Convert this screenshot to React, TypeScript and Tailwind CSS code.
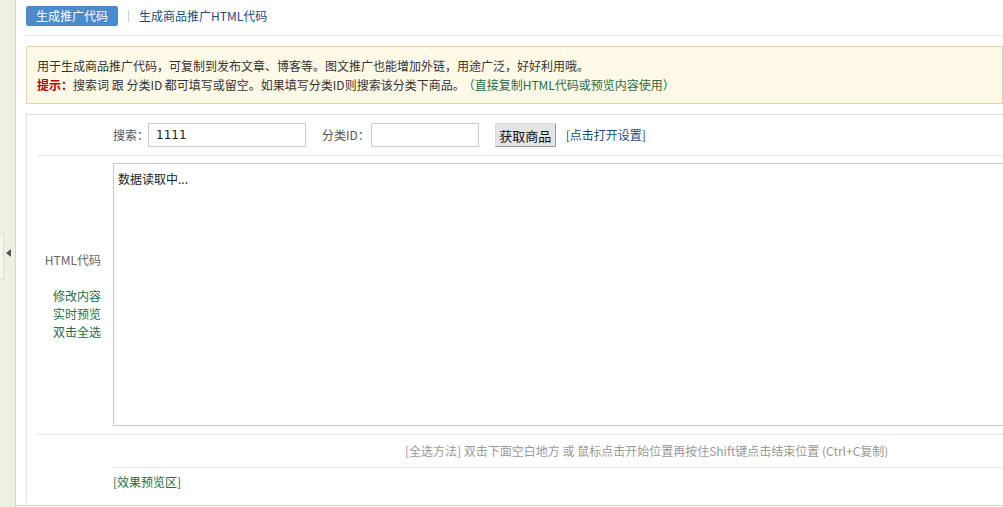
import React from "react";

const font = { fontFamily: '"Noto Sans CJK SC", "Liberation Sans", sans-serif' };

export default function App() {
  return (
    <div
      className="w-[1003px] h-[507px] overflow-hidden bg-white flex text-[12px] leading-[18px] text-[#333]"
      style={font}
    >
      {/* left strip */}
      <div className="w-[16px] shrink-0 bg-[#edf2e0] border-r border-[#cfdcb8] flex flex-col">
        <div className="h-[233px]" />
        <div className="h-[47px] flex">
          <div className="w-[4px] h-full border-y border-r border-[#d7e1c6] bg-[#f4f7ee]" />
          <div className="relative flex-1">
            <div className="absolute left-[2px] top-[16px] w-0 h-0 border-y-[4px] border-y-transparent border-r-[5px] border-r-[#555]" />
          </div>
        </div>
      </div>

      {/* main */}
      <div className="flex-1 flex flex-col border-b border-[#cfdcb8] h-[506px] overflow-hidden">
        <div className="pl-[10px] flex flex-col flex-1">
          {/* tabs */}
          <div className="h-[36px] flex items-start pt-[6px] border-b border-[#e8e8e8]">
            <div className="h-[20px] w-[92px] bg-[#4b8bcb] rounded-[2px] text-white text-[12px] flex items-center justify-center">
              生成推广代码
            </div>
            <div className="w-px h-[12px] bg-[#ccc] mx-[10px] mt-[4px]" />
            <div className="h-[20px] flex items-center text-[#1a4d7c]">生成商品推广HTML代码</div>
          </div>

          {/* notice */}
          <div className="mt-[10px] h-[58px] border border-[#e2d4a6] bg-[#fffae8] px-[10px] pt-[10px] flex flex-col">
            <div className="h-[19px]">用于生成商品推广代码，可复制到发布文章、博客等。图文推广也能增加外链，用途广泛，好好利用哦。</div>
            <div className="h-[19px]">
              <span className="text-[#c00000] font-bold">提示：</span>
              搜索词 跟 分类ID 都可填写或留空。如果填写分类ID则搜索该分类下商品。
              <span className="text-[#2a6b46] ml-[4px]">（直接复制HTML代码或预览内容使用）</span>
            </div>
          </div>

          {/* main box */}
          <div className="mt-[10px] flex-1 border-t border-l border-[#dedede] mb-[2px] flex flex-col">
            {/* search row */}
            <div className="ml-[10px] h-[41px] border-b border-[#e6e6e6] flex items-center pl-[76px]">
              <span className="text-[#555]">搜索：</span>
              <input
                className="ml-[-1px] w-[158px] h-[24px] border border-[#ccc] px-[7px] text-[12px] text-[#222] outline-none"
                defaultValue="1111"
                style={{ fontFamily: '"DejaVu Sans", sans-serif' }}
              />
              <span className="ml-[16px] text-[#555]">分类ID：</span>
              <input className="ml-[1px] w-[108px] h-[24px] border border-[#ccc] outline-none" />
              <button className="ml-[16px] h-[24px] w-[61px] bg-[#e4e4e4] border border-[#999] border-t-[#ddd] border-l-[#ddd] text-[13px] text-[#111] leading-none">
                获取商品
              </button>
              <span className="ml-[10px] text-[#1a4d7c]">[点击打开设置]</span>
            </div>

            {/* code row */}
            <div className="ml-[10px] flex border-b border-[#e6e6e6] h-[279px] pt-[7px]">
              <div className="w-[64px] shrink-0 flex flex-col items-end pt-[88px] text-right">
                <div className="text-[#666]">HTML代码</div>
                <div className="mt-[18px] text-[#2a6b46] leading-[18px]">
                  修改内容
                  <br />
                  实时预览
                  <br />
                  双击全选
                </div>
              </div>
              <div className="ml-[12px] w-[900px] h-[263px] shrink-0 border border-[#c8c8c8] px-[4px] pt-[6px] text-[#222]">
                数据读取中...
              </div>
            </div>

            {/* help row */}
            <div className="ml-[10px] h-[32px] flex items-center pl-[368px] text-[#999]">
              [全选方法] 双击下面空白地方 或 鼠标点击开始位置再按住Shift键点击结束位置 (Ctrl+C复制)
            </div>
            <div className="ml-[86px] border-t border-[#e6e6e6] pt-[5px] text-[#2a6b46]">[效果预览区]</div>
          </div>
        </div>
      </div>
    </div>
  );
}
